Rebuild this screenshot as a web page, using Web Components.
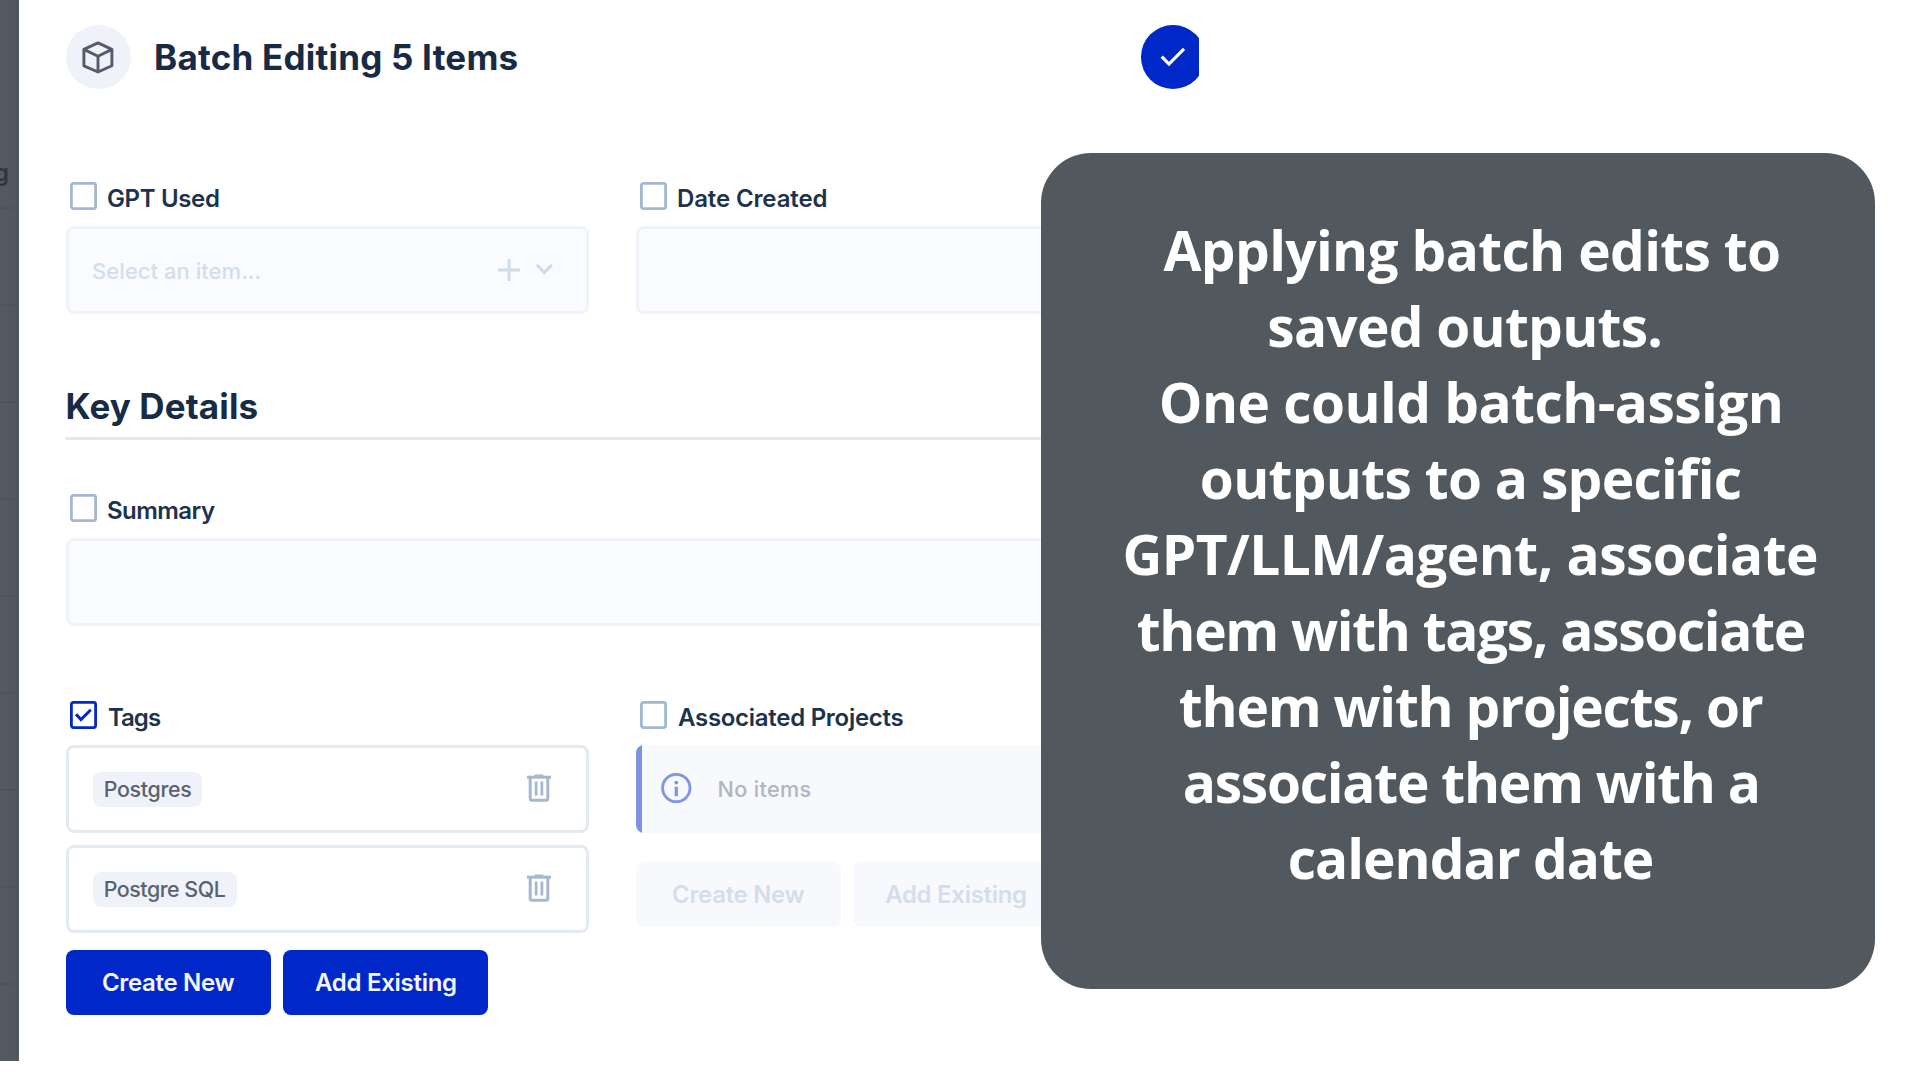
<!DOCTYPE html>
<html lang="en">
<head>
<meta charset="utf-8">
<title>Batch Editing</title>
<style>
html, body { margin: 0; padding: 0; }
body { width: 1920px; height: 1080px; overflow: hidden; position: relative; background: #fff; font-family: Inter, "Liberation Sans", sans-serif; font-optical-sizing: none; }
</style>
</head>
<body>
<batch-page></batch-page>
<script>
const define = (name, html, setup) => customElements.define(name, class extends HTMLElement {
  connectedCallback() {
    if (this.shadowRoot) return;
    const root = this.attachShadow({ mode: 'open' });
    const t = document.createElement('template');
    t.innerHTML = html;
    root.append(t.content.cloneNode(true));
    if (setup) setup(this, root);
  }
});

// One line of text, tracked so that its glyphs span exactly `w` pixels.
define('ink-text', `<style>
  :host { display: block; flex: none; white-space: nowrap; text-align: left; font-kerning: normal; font-variant-ligatures: none; }
</style><slot></slot>`, el => {
  const s = getComputedStyle(el), c = document.createElement('canvas').getContext('2d');
  c.font = `${s.fontWeight} ${s.fontSize} ${s.fontFamily}`;
  const text = el.textContent, m = c.measureText(text), w = +el.getAttribute('w');
  const range = document.createRange();
  range.selectNodeContents(el);
  const bearings = m.width - m.actualBoundingBoxLeft - m.actualBoundingBoxRight;
  const ink = range.getBoundingClientRect().width - bearings;
  el.style.width = w + 'px';
  el.style.letterSpacing = ((w - ink) / (text.length - 1)).toFixed(3) + 'px';
  el.style.textIndent = m.actualBoundingBoxLeft.toFixed(2) + 'px';
});

define('dim-backdrop', `<style>
  :host { display: block; width: 18.8px; height: 1061.3px; flex: none; overflow: hidden; background: linear-gradient(90deg, #535a61, #50585e); color: #2c363f; }
  .head { box-sizing: border-box; height: 207px; padding-top: 159px; display: flex; justify-content: flex-end; width: 9px; font-size: 23px; font-weight: 600; line-height: 28px; }
  .row { height: 95px; border-top: 2px solid #4b555a; }
</style><div class="head">g</div>` + '<div class="row"></div>'.repeat(9));

define('check-label', `<style>
  :host { display: flex; height: 28px; margin-bottom: 16px; padding-left: 4.3px; gap: 10.5px; font-size: 24px; font-weight: 600; line-height: 28px; color: #1d324c; }
  svg { width: 27px; height: 28px; flex: none; }
  rect { fill: #fff; stroke: #a3b7d2; stroke-width: 2.8; }
  path { display: none; fill: none; stroke: #0028c8; stroke-width: 3; }
  :host([checked]) rect { stroke: #0028c8; }
  :host([checked]) path { display: block; }
  .t { margin-top: 3px; }
</style><svg viewBox="0 0 27 28"><rect x="1.4" y="1.4" width="24.2" height="25.2" rx="2"/><path d="M6 13.3l5 5.3 9.8-9.8"/></svg><div class="t"><slot></slot></div>`);

define('form-field', `<style>
  :host { display: block; flex: none; width: 523.3px; }
  :host([wide]) { width: 1094px; }
</style><slot name="label"></slot><slot></slot>`);

define('disabled-input', `<style>
  :host { box-sizing: border-box; display: flex; align-items: center; height: 87.6px; border: 3px solid #f0f3f8; border-radius: 8px; background: #fafbfe; padding: 2px 33.5px 0 24px; font-size: 22px; font-weight: 500; color: #d3deea; justify-content: space-between; }
  svg { width: 56px; height: 24px; margin-top: -3px; fill: none; stroke: #d0dbe8; stroke-width: 3; display: none; }
  :host([select]) svg { display: block; }
</style><slot></slot><svg viewBox="0 0 56 24"><path d="M1.2 12h21.8M12.1 1.1v21.8M39.8 6.8l7.5 7.8L54.8 6.8"/></svg>`);

define('tag-card', `<style>
  :host { box-sizing: border-box; display: flex; align-items: center; justify-content: space-between; height: 88px; border: 3px solid #e4eaf2; border-radius: 8px; padding: 0 34px 0 23.6px; margin-bottom: 12px; background: #fff; }
  .pill { height: 35px; line-height: 34px; padding: 0 11px 0 12px; border-radius: 8px; background: #eff2f8; color: #5a6272; font-size: 21.4px; font-weight: 500; }
  svg { width: 26px; height: 30px; margin-top: -2px; fill: none; stroke: #a6b8cf; stroke-width: 3; }
</style><div class="pill"><slot></slot></div>
<svg viewBox="0 0 26 30"><path d="M1 4.2h24"/><path d="M8.5 2.8h9" stroke-width="2.6"/><path d="M4.2 4v21.6q0 1.7 1.7 1.7h14.2q1.7 0 1.7-1.7V4"/><path d="M10.1 8.5V22.5M15.9 8.5V22.5" stroke-width="2.8"/></svg>`);

define('action-row', `<style>
  :host { display: flex; gap: 11.5px; }
  :host([off]) { padding-top: 12px; }
</style><slot></slot>`);

define('push-button', `<style>
  :host { display: flex; flex: none; align-items: center; justify-content: center; width: 205.3px; height: 64.7px; border-radius: 8px; background: #0028c8; color: #f5f7ff; font-size: 24px; font-weight: 600; line-height: 30px; box-sizing: border-box; padding-top: 1px; }
  :host([off]) { background: #f8f9fd; color: #d4deea; }
</style><slot></slot>`);

define('empty-note', `<style>
  :host { box-sizing: border-box; display: flex; align-items: center; height: 88px; border-radius: 8px; overflow: hidden; background: #f7f9fd; font-size: 21.6px; line-height: 26px; font-weight: 500; color: #b1b5bd; margin-bottom: 17px; }
  .bar { width: 6.3px; height: 100%; background: #7d92e3; margin-right: 19px; }
  svg { width: 31px; height: 32px; margin: -2px 26px 0 0; }
</style><div class="bar"></div>
<svg viewBox="0 0 31 32"><circle cx="15.3" cy="16" r="13.7" fill="none" stroke="#7f94e5" stroke-width="2.8"/><path d="M15.3 14.8v9.4" stroke="#7f94e5" stroke-width="3.2"/><circle cx="15.3" cy="10.6" r="1.9" fill="#7f94e5"/></svg><slot></slot>`);

define('panel-header', `<style>
  :host { display: flex; align-items: center; height: 64px; font-size: 35px; font-weight: 700; line-height: 42px; color: #172b45; }
  .badge { width: 64.5px; height: 64px; border-radius: 50%; background: #eff2f8; margin-right: 25.5px; display: flex; align-items: center; justify-content: center; flex: none; }
  .ok { margin-left: auto; margin-right: -6.6px; width: 64.5px; height: 64px; border-radius: 50%; background: #0028c8; flex: none; display: flex; align-items: center; justify-content: center; }
</style>
<div class="badge"><svg width="34" height="34" viewBox="0 0 34 34" fill="none" stroke="#555b6d" stroke-width="2.9" stroke-linejoin="round"><path d="M17 2.9L30.9 9.4V25.8L17 32L2.9 25.8V9.4zM2.9 9.4L17 16.2L30.9 9.4M17 16.2V32"/></svg></div>
<div class="t"><slot></slot></div>
<div class="ok"><svg width="26" height="22" viewBox="0 0 26 22" fill="none" stroke="#fff" stroke-width="3.2"><path d="M1.7 10.6l7.3 7.4L24 2.8"/></svg></div>`);

define('section-title', `<style>
  :host { display: block; box-sizing: border-box; width: 1094px; padding: 0 0 10px 1.4px; border-bottom: 3px solid #e3e9f3; font-size: 35px; font-weight: 700; line-height: 42px; color: #172b45; }
</style><slot></slot>`);

define('field-row', `<style>:host { display: flex; gap: 46.8px; align-items: flex-start; }</style><slot></slot>`);

define('caption-card', `<style>
  :host { position: absolute; left: 1041px; top: 153px; width: 833.6px; height: 836.2px; box-sizing: border-box; padding: 59px 0 0 27px; border-radius: 50px; background: #51585e; color: #fff; display: flex; flex-direction: column; align-items: center; font: 660 55px/76px "Open Sans", "Noto Sans", sans-serif; }
  .shift { margin-right: 13px; }
</style>
<ink-text w="615.5">Applying batch edits to</ink-text>
<ink-text w="391" class="shift">saved outputs.</ink-text>
<ink-text w="619">One could batch-assign</ink-text>
<ink-text w="539">outputs to a specific</ink-text>
<ink-text w="691.5">GPT/LLM/agent, associate</ink-text>
<ink-text w="667">them with tags, associate</ink-text>
<ink-text w="583">them with projects, or</ink-text>
<ink-text w="573">associate them with a</ink-text>
<ink-text w="363">calendar date</ink-text>`);

define('batch-page', `<style>
  :host { display: flex; width: 1920px; height: 1080px; }
  main { box-sizing: border-box; width: 1180px; height: 1080px; padding: 25.4px 0 0 47.3px; overflow: hidden; display: flex; flex-direction: column; }
  .a { margin-top: 92.9px; }
  .b { margin-top: 71px; }
  .c { margin-top: 54.3px; }
  .d { margin-top: 75.5px; }
  .buttons { margin-top: 17px; }
</style>
<dim-backdrop></dim-backdrop>
<main>
  <panel-header><ink-text w="361.5">Batch Editing 5 Items</ink-text></panel-header>
  <field-row class="a">
    <form-field><check-label slot="label"><ink-text w="111">GPT Used</ink-text></check-label><disabled-input select><ink-text w="166.5">Select an item...</ink-text></disabled-input></form-field>
    <form-field><check-label slot="label"><ink-text w="148.5">Date Created</ink-text></check-label><disabled-input></disabled-input></form-field>
  </field-row>
  <section-title class="b"><ink-text w="190">Key Details</ink-text></section-title>
  <form-field wide class="c"><check-label slot="label"><ink-text w="107">Summary</ink-text></check-label><disabled-input></disabled-input></form-field>
  <field-row class="d">
    <form-field><check-label slot="label" checked><ink-text w="53">Tags</ink-text></check-label>
      <tag-card><ink-text w="86.5">Postgres</ink-text></tag-card>
      <tag-card><ink-text w="121">Postgre SQL</ink-text></tag-card>
      <action-row class="buttons"><push-button><ink-text w="131.5">Create New</ink-text></push-button><push-button><ink-text w="141">Add Existing</ink-text></push-button></action-row>
    </form-field>
    <form-field><check-label slot="label"><ink-text w="225.5">Associated Projects</ink-text></check-label>
      <empty-note><ink-text w="92">No items</ink-text></empty-note>
      <action-row off><push-button off><ink-text w="131.5">Create New</ink-text></push-button><push-button off><ink-text w="141">Add Existing</ink-text></push-button></action-row>
    </form-field>
  </field-row>
</main>
<caption-card></caption-card>`);
</script>
</body>
</html>
